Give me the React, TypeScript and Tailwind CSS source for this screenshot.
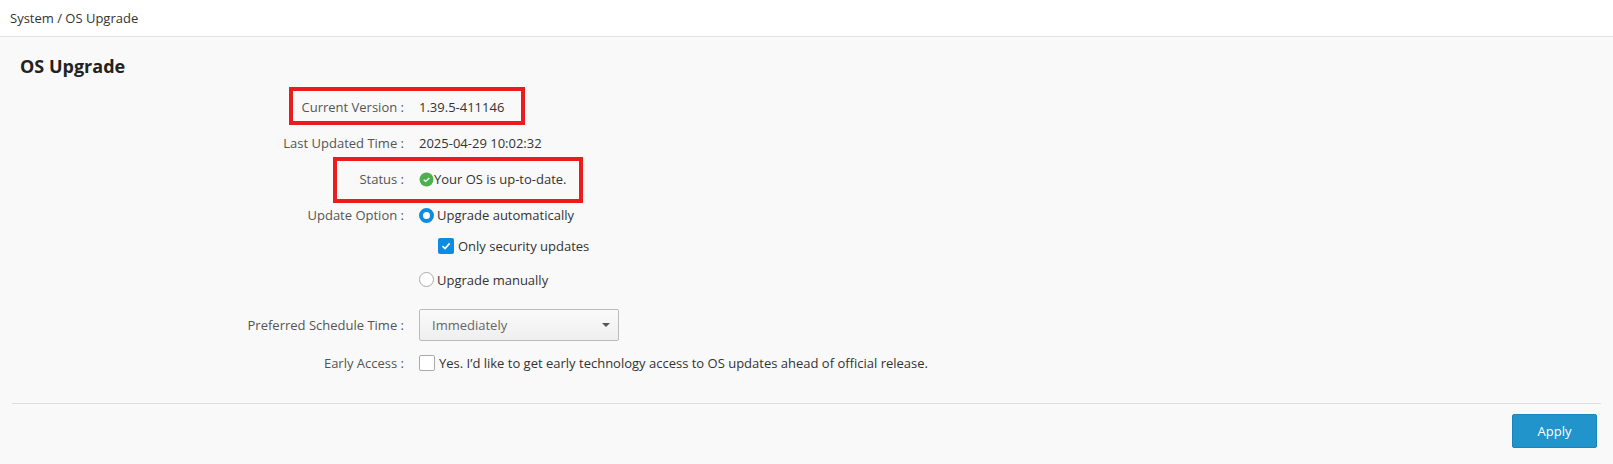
import React from "react";

function Row({ label, children, className = "" }: { label: string; children: React.ReactNode; className?: string }) {
  return (
    <div className={`flex items-center ${className}`}>
      <div className="w-[392px] shrink-0 text-right text-[#555]">{label} :</div>
      <div className="ml-[15px] flex items-center text-[#333]">{children}</div>
    </div>
  );
}

function Radio({ on }: { on?: boolean }) {
  return on ? (
    <span className="h-[15px] w-[15px] shrink-0 rounded-full border-[4px] border-[#0f8ce0] bg-white" />
  ) : (
    <span className="h-[15px] w-[15px] shrink-0 rounded-full border border-[#aaa] bg-white" />
  );
}

export default function App() {
  return (
    <div className="h-[464px] w-[1613px] overflow-hidden bg-[#f9f9f9] text-[13px] leading-[18px] [font-family:'Open_Sans','Noto_Sans',sans-serif]">
      <header className="flex h-[37px] items-center border-b border-[#e2e2e2] bg-white px-[10px] text-[#333]">
        System / OS Upgrade
      </header>
      <div className="pl-[12px] pr-[12px]">
        <h1 className="pl-[8px] pt-[17px] text-[18px] leading-[24px] font-bold text-[#222]">OS Upgrade</h1>

        <div className="mt-[11px]">
          <Row label="Current Version" className="relative h-[36px]">
            1.39.5-411146
            <span className="absolute left-[277px] top-[-2px] h-[38px] w-[236px] border-[4px] border-[#ed1c1c]" />
          </Row>
          <Row label="Last Updated Time" className="h-[36px]">2025-04-29 10:02:32</Row>
          <Row label="Status" className="relative h-[36px]">
            <svg width="15" height="15" viewBox="0 0 14 14">
              <circle cx="7" cy="7" r="6.5" fill="#4caf50" />
              <path d="M4.4 7.2 6.2 8.9 9.6 5.6" fill="none" stroke="#fff" strokeWidth="1.1" />
            </svg>
            Your OS is up-to-date.
            <span className="absolute left-[321px] top-[-4px] h-[46px] w-[250px] border-[4px] border-[#ed1c1c]" />
          </Row>
          <Row label="Update Option" className="h-[36px]">
            <Radio on />
            <span className="ml-[3px]">Upgrade automatically</span>
          </Row>
          <div className="flex h-[26px] items-center pl-[426px] text-[#333]">
            <span className="flex h-[16px] w-[16px] items-center justify-center rounded-[2px] bg-[#0f8ce0]">
              <svg width="12" height="12" viewBox="0 0 12 12">
                <path d="M2.5 6.2 5 8.6 9.6 3.4" fill="none" stroke="#fff" strokeWidth="1.6" />
              </svg>
            </span>
            <span className="ml-[4px]">Only security updates</span>
          </div>
          <div className="flex h-[41px] items-center pl-[407px] text-[#333]">
            <Radio />
            <span className="ml-[3px]">Upgrade manually</span>
          </div>
          <Row label="Preferred Schedule Time" className="mt-[9px] h-[32px]">
            <div className="flex h-[32px] w-[200px] items-center justify-between rounded-[2px] border border-[#bbb] bg-gradient-to-b from-[#fafafa] to-[#efefef] pl-[12px] pr-[8px] text-[#666]">
              Immediately
              <span className="h-0 w-0 border-x-[4px] border-t-[4px] border-x-transparent border-t-[#555]" />
            </div>
          </Row>
          <Row label="Early Access" className="mt-[7px] h-[30px]">
            <span className="h-[16px] w-[16px] shrink-0 rounded-[2px] border border-[#aaa] bg-white" />
            <span className="ml-[4px]">Yes. I’d like to get early technology access to OS updates ahead of official release.</span>
          </Row>
        </div>

        <div className="mt-[25px] border-t border-[#ddd]" />
        <div className="flex justify-end pt-[10px] pr-[4px]">
          <button className="h-[34px] w-[85px] rounded-[2px] border border-[#1b85bb] bg-[#2094cb] text-[13px] text-white">Apply</button>
        </div>
      </div>
    </div>
  );
}
